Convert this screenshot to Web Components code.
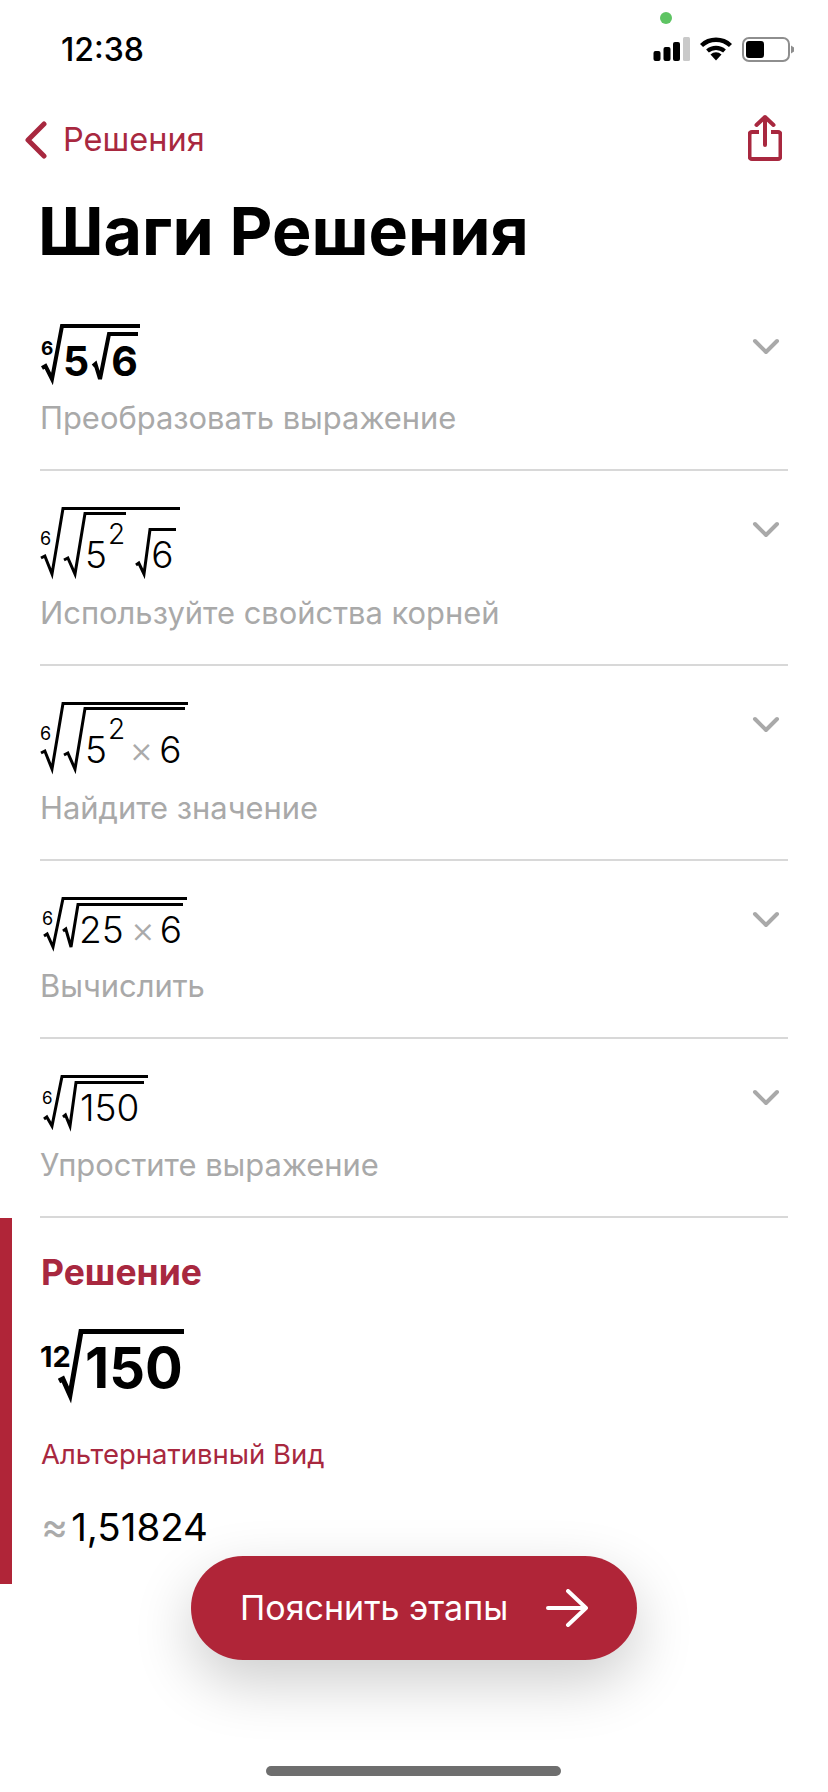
<!DOCTYPE html>
<html lang="ru">
<head>
<meta charset="utf-8">
<title>Шаги Решения</title>
<style>
	html, body { margin: 0; padding: 0; background: #fff; }
	body { width: 828px; height: 1792px; overflow: hidden; position: relative; font-family: Inter, "Liberation Sans", sans-serif; color: #000; }
	.reg { font: 350 37px/27px Inter, sans-serif; }
	.bold { font: 700 41px/30px Inter, sans-serif; }
	.times { color: #aaa; }
</style>
</head>
<body>
<status-bar></status-bar>
<nav-bar></nav-bar>
<page-title>Шаги Решения</page-title>

<step-row caption="Преобразовать выражение">
	<math-root class="bold" index="6" weight="bold" w="20" h="57" lw="4" bend="42" low="10" ix="-1" iy="15" isize="19" pl="1" pr="2" style="margin-left:1px">
		<span style="margin-bottom:5px">5</span>
		<math-root w="16" h="49" lw="4" bend="32" low="7" pl="2" pr="0" style="margin-left:4px"><span style="margin-bottom:5px">6</span></math-root>
	</math-root>
</step-row>

<step-row caption="Используйте свойства корней">
	<math-root class="reg" index="6" w="22" h="69" lw="3" bend="49" low="11" ix="-1" iy="23" isize="18" pl="1" pr="4">
		<math-root w="21" h="64" lw="3" bend="46" low="11" pl="0" pr="1">
			<span style="margin-bottom:8px">5</span><sup-num>2</sup-num>
		</math-root>
		<math-root w="14" h="48" lw="3" bend="35" low="8" pl="1" pr="3" style="margin-left:10px"><span style="margin-bottom:8px">6</span></math-root>
	</math-root>
</step-row>

<step-row caption="Найдите значение">
	<math-root class="reg" index="6" w="22" h="69" lw="3" bend="49" low="11" ix="-1" iy="23" isize="18" pl="1" pr="3">
		<math-root w="21" h="64" lw="3" bend="46" low="11" pl="0" pr="3">
			<span style="margin-bottom:8px">5</span><sup-num>2</sup-num>
			<span class="times" style="margin:0 6px 11px 4px;line-height:20px">×</span>
			<span style="margin-bottom:8px">6</span>
		</math-root>
	</math-root>
</step-row>

<step-row caption="Вычислить">
	<math-root class="reg" index="6" w="19" h="52" lw="3" bend="37" low="9" ix="-2" iy="13" isize="18" pl="0" pr="4" style="margin-left:3px">
		<math-root w="15" h="46" lw="3" bend="26" low="8" pl="1" pr="1">
			<span style="margin-bottom:6px">25</span>
			<span class="times" style="margin:0 5px 9px 7px;line-height:20px">×</span>
			<span style="margin-bottom:6px">6</span>
		</math-root>
	</math-root>
</step-row>

<step-row caption="Упростите выражение">
	<math-root class="reg" index="6" w="18" h="53" lw="3" bend="42" low="8" ix="-2" iy="15" isize="17" pl="1" pr="4" style="margin-left:3px">
		<math-root w="13" h="47" lw="3" bend="34" low="7" pl="4" pr="5" style="font-size:37px">
			<span style="margin-bottom:7px">150</span>
		</math-root>
	</math-root>
</step-row>

<solution-panel label="Решение" alt="Альтернативный Вид">
	<math-root slot="root" index="12" w="22" h="68" lw="5" bend="50" low="11" ix="-19" iy="13" isize="29" ibold pl="4" pr="1" style="font:700 56px/41px Inter,sans-serif;color:#000">
		<span style="margin-bottom:8px">150</span>
	</math-root>
	<span slot="approx" class="times">≈</span><span slot="value">1,51824</span>
</solution-panel>

<action-button>Пояснить этапы</action-button>
<home-bar></home-bar>

<script>
	// Небольшой помощник: шаблон -> открытый shadow root.
	function mount(el, html) {
		el.attachShadow({ mode: 'open' }).innerHTML = html;
	}

	class StatusBar extends HTMLElement {
		connectedCallback() {
			mount(this, `
			<style>
				:host { display: flex; justify-content: space-between; align-items: flex-start; height: 98px; box-sizing: border-box; padding: 32px 33px 0 61px; position: relative; }
				.time { font: 500 32px/36px Inter, sans-serif; color: #000; }
				.icons { display: flex; gap: 9px; align-items: flex-start; padding-top: 5px; }
				.dot { position: absolute; left: 660px; top: 12px; width: 12px; height: 12px; border-radius: 50%; background: #5ec463; }
				svg { display: block; }
			</style>
			<span class="time">12:38</span>
			<span class="dot"></span>
			<div class="icons">
				<svg width="38" height="24" viewBox="0 0 38 24">
					<rect x="0.5" y="14" width="7" height="10" rx="2"/>
					<rect x="10.5" y="10" width="7" height="14" rx="2"/>
					<rect x="20" y="5" width="7" height="19" rx="2"/>
					<rect x="30" y="0" width="7" height="24" rx="1.5" fill="#c9c9c9"/>
				</svg>
				<svg width="32" height="24" viewBox="0 0 32 24">
					<path d="M1.5 8.5a21 21 0 0 1 29 0" fill="none" stroke="#000" stroke-width="4.4"/>
					<path d="M7.5 14a13 13 0 0 1 17 0" fill="none" stroke="#000" stroke-width="4.2"/>
					<path d="M10.5 17.5a8 8 0 0 1 11 0L16 23.5z"/>
				</svg>
				<svg width="53" height="25" viewBox="0 0 53 25" style="margin-left:1px">
					<rect x="1" y="1" width="46" height="23" rx="6" fill="none" stroke="#8e8e8e" stroke-width="2"/>
					<rect x="4" y="4" width="18" height="17" rx="3"/>
					<path d="M49 8.500l3 2v4l-3 2z" fill="#8e8e8e"/>
				</svg>
			</div>`);
		}
	}

	class NavBar extends HTMLElement {
		connectedCallback() {
			mount(this, `
			<style>
				:host { display: flex; justify-content: space-between; align-items: center; height: 84px; padding: 0 46px 0 24px; color: #a8283f; }
				.back { display: flex; align-items: center; gap: 16px; font: 400 32.500px/40px Inter, sans-serif; }
				svg { display: block; }
			</style>
			<div class="back">
				<svg width="23" height="38" viewBox="0 0 23 38"><path d="M20 3L4 19l16 16" fill="none" stroke="currentColor" stroke-width="5" stroke-linecap="round" stroke-linejoin="round"/></svg>
				<span>Решения</span>
			</div>
			<svg width="34" height="48" viewBox="0 0 34 48" style="margin-top:-5px">
				<path d="M11 18H4a2.500 2.500 0 0 0-2.500 2.500v22A2.500 2.500 0 0 0 4 45h26a2.500 2.500 0 0 0 2.500-2.500v-22A2.500 2.500 0 0 0 30 18h-7" fill="none" stroke="currentColor" stroke-width="4"/>
				<path d="M17 31V3M8.500 11L17 3l8.500 8" fill="none" stroke="currentColor" stroke-width="4" stroke-linecap="round" stroke-linejoin="round"/>
			</svg>`);
		}
	}

	class PageTitle extends HTMLElement {
		connectedCallback() {
			mount(this, `
			<style>
				:host { display: block; padding: 0 38px; height: 106px; font: 700 66.300px/98px Inter, sans-serif; color: #000; }
			</style>
			<slot></slot>`);
		}
	}

	class StepRow extends HTMLElement {
		connectedCallback() {
			mount(this, `
			<style>
				:host { display: block; margin: 0 40px 0 40px; padding-top: 36px; border-bottom: 2px solid #d8d8d8; }
				.head { display: flex; justify-content: space-between; align-items: flex-start; }
				.chev { display: block; margin: 14px 7px 0 0; }
				.math { display: flex; margin-left: 1px; }
				.caption { font: 400 30.900px/40px Inter, sans-serif; color: #a9a9a9; padding: 17px 0 31px 0; }
			</style>
			<div class="head">
				<div class="math"><slot></slot></div>
				<svg class="chev" width="30" height="20" viewBox="0 0 30 20"><path d="M4 3l11 11L26 3" fill="none" stroke="#a9a9a9" stroke-width="4" stroke-linecap="round" stroke-linejoin="round"/></svg>
			</div>
			<div class="caption">${this.getAttribute('caption')}</div>`);
		}
	}

	// Корень: знак радикала в svg, черта сверху - border контента.
	class MathRoot extends HTMLElement {
		connectedCallback() {
			const num = (name, def) => Number(this.getAttribute(name) ?? def);
			const w = num('w', 20);
			const h = num('h', 50);
			const lw = num('lw', 3);
			const bend = num('bend', 40);
			const low = num('low', 10);
			const index = this.getAttribute('index');
			const isize = num('isize', 17);
			const indexHtml = index
				? `<span class="index" style="left:${num('ix', 0)}px;top:${num('iy', 0)}px;font-size:${isize}px">${index}</span>`
				: '';
			mount(this, `
			<style>
				:host { display: inline-flex; align-items: stretch; position: relative; height: ${h}px; align-self: flex-end; }
				svg { display: block; flex: none; overflow: visible; }
				.body { display: flex; align-items: flex-end; border-top: ${lw}px solid #000; padding: 0 ${num('pr', 3)}px 0 ${num('pl', 2)}px; box-sizing: border-box; }
				.index { position: absolute; font-family: Inter, sans-serif; font-weight: ${this.hasAttribute('ibold') || this.getAttribute('weight') === 'bold' ? 700 : 400}; line-height: 1; color: #000; }
			</style>
			<svg width="${w}" height="${h}" viewBox="0 0 ${w} ${h}">
				<path d="M0 ${bend + 2}L${low * 0.35} ${bend}L${low} ${h - 2}L${w} ${lw / 2}H${w + 1}" fill="none" stroke="#000" stroke-width="${lw}"/>
			</svg>
			${indexHtml}
			<div class="body"><slot></slot></div>`);
		}
	}

	class SupNum extends HTMLElement {
		connectedCallback() {
			mount(this, `
			<style>
				:host { display: inline-block; font-size: 28px; line-height: 20px; align-self: flex-end; margin: 0 0 32px 1px; }
			</style>
			<slot></slot>`);
		}
	}

	class SolutionPanel extends HTMLElement {
		connectedCallback() {
			mount(this, `
			<style>
				:host { display: block; height: 366px; box-sizing: border-box; border-left: 12px solid #b02538; padding: 30px 0 0 29px; color: #a8283f; }
				.label { font: 700 35.500px/50px Inter, sans-serif; }
				.math { display: flex; margin-top: 31px; height: 68px; margin-left: 18px; }
				.alt { font: 400 27.500px/40px Inter, sans-serif; margin-top: 37px; }
				.value { display: flex; align-items: baseline; gap: 3px; margin-top: 29px; font: 400 38.500px/46px Inter, sans-serif; color: #000; }
				::slotted([slot=approx]) { color: #aaa; font-size: 41px; }
			</style>
			<div class="label">${this.getAttribute('label')}</div>
			<div class="math"><slot name="root"></slot></div>
			<div class="alt">${this.getAttribute('alt')}</div>
			<div class="value"><slot name="approx"></slot><slot name="value"></slot></div>`);
		}
	}

	class ActionButton extends HTMLElement {
		connectedCallback() {
			mount(this, `
			<style>
				:host { position: absolute; left: 191px; top: 1556px; width: 446px; height: 104px; box-sizing: border-box; padding: 0 49px 0 49px; display: flex; align-items: center; justify-content: space-between; border-radius: 52px; background: #b02538; color: #fff; font: 400 34px/40px Inter, sans-serif; box-shadow: 0 22px 60px rgba(0,0,0,.2); }
				svg { display: block; }
			</style>
			<slot></slot>
			<svg width="42" height="38" viewBox="0 0 42 38"><path d="M2 19h37M22 2l18 17-18 17" fill="none" stroke="#fff" stroke-width="4" stroke-linecap="round" stroke-linejoin="round"/></svg>`);
		}
	}

	class HomeBar extends HTMLElement {
		connectedCallback() {
			mount(this, `
			<style>
				:host { position: absolute; left: 266px; top: 1766px; width: 295px; height: 10px; border-radius: 5px; background: #6e6e6e; }
			</style>`);
		}
	}

	customElements.define('status-bar', StatusBar);
	customElements.define('nav-bar', NavBar);
	customElements.define('page-title', PageTitle);
	customElements.define('step-row', StepRow);
	customElements.define('math-root', MathRoot);
	customElements.define('sup-num', SupNum);
	customElements.define('solution-panel', SolutionPanel);
	customElements.define('action-button', ActionButton);
	customElements.define('home-bar', HomeBar);
</script>
</body>
</html>
